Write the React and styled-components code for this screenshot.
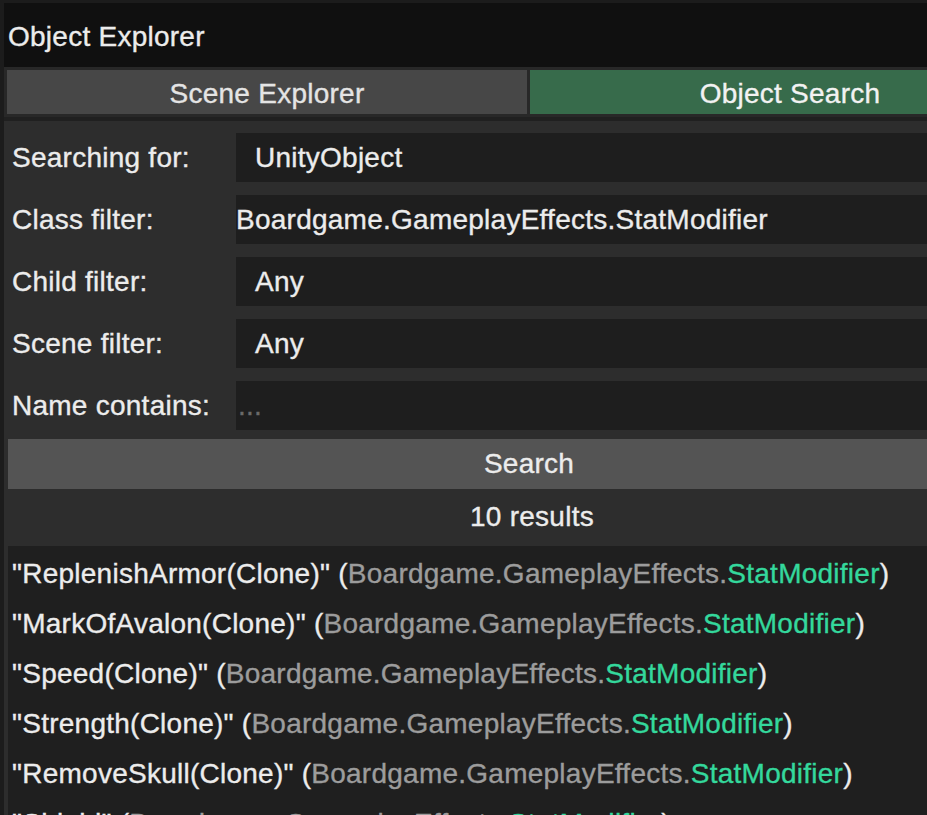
import React from "react";
import styled, { createGlobalStyle } from "styled-components";

const GlobalStyle = createGlobalStyle`
  html, body {
    margin: 0;
    padding: 0;
    background: #1c1c1c;
    overflow: hidden;
  }
  * {
    box-sizing: border-box;
  }
`;

const filters = [
  { label: "Searching for:", value: "UnityObject", padded: true },
  { label: "Class filter:", value: "Boardgame.GameplayEffects.StatModifier" },
  { label: "Child filter:", value: "Any", padded: true },
  { label: "Scene filter:", value: "Any", padded: true },
  { label: "Name contains:", value: "...", placeholder: true },
];

const results = [
  "ReplenishArmor(Clone)",
  "MarkOfAvalon(Clone)",
  "Speed(Clone)",
  "Strength(Clone)",
  "RemoveSkull(Clone)",
  "Shield",
  "Haste(Clone)",
  "Poison(Clone)",
  "Regen(Clone)",
  "Weakness(Clone)",
];

function App() {
  return (
    <>
      <GlobalStyle />
      <Window>
        <TitleBar>Object Explorer</TitleBar>
        <TabBar>
          <Tab>Scene Explorer</Tab>
          <Tab active>Object Search</Tab>
        </TabBar>
        <Content>
          <FilterList>
            {filters.map((f) => (
              <FilterRow key={f.label}>
                <Label>{f.label}</Label>
                <Field padded={f.padded} placeholder={f.placeholder}>
                  {f.value}
                </Field>
              </FilterRow>
            ))}
          </FilterList>
          <SearchButton>Search</SearchButton>
          <ResultCount>10 results</ResultCount>
          <ResultList>
            {results.map((name, i) => (
              <ResultRow key={i}>
                "{name}" (<Namespace>Boardgame.GameplayEffects.</Namespace>
                <TypeName>StatModifier</TypeName>)
              </ResultRow>
            ))}
          </ResultList>
        </Content>
      </Window>
    </>
  );
}

export default App;

const Window = styled.div`
  width: 1060px;
  padding: 3px 0 0 4px;
  background: #1c1c1c;
  display: flex;
  flex-direction: column;
  font-family: "Liberation Sans", Arial, sans-serif;
  font-size: 28px;
  letter-spacing: 0.25px;
  -webkit-text-stroke: 0.35px currentColor;
  color: #ececec;
`;

const TitleBar = styled.div`
  height: 64px;
  flex-shrink: 0;
  background: #101010;
  padding: 3px 0 0 4px;
  display: flex;
  align-items: center;
`;

const TabBar = styled.div`
  display: flex;
  flex-shrink: 0;
  gap: 3px;
  padding: 3px 10px 3px 3px;
  background: #282828;
  border-bottom: 4px solid #202020;
`;

const Tab = styled.div`
  flex: 1;
  height: 44px;
  padding-top: 3px;
  display: flex;
  align-items: center;
  justify-content: center;
  background: ${(p) => (p.active ? "#376b4b" : "#474747")};
  color: ${(p) => (p.active ? "#f2f2f2" : "#e4e4e4")};
`;

const Content = styled.div`
  background: #2d2d2d;
  padding-top: 12px;
  display: flex;
  flex-direction: column;
`;

const FilterList = styled.div`
  display: flex;
  flex-direction: column;
  gap: 13px;
`;

const FilterRow = styled.div`
  display: flex;
  height: 49px;
`;

const Label = styled.div`
  width: 232px;
  padding-left: 8px;
  display: flex;
  align-items: center;
`;

const Field = styled.div`
  flex: 1;
  background: #1e1e1e;
  display: flex;
  align-items: center;
  padding-left: ${(p) => (p.padded ? "19px" : p.placeholder ? "2px" : "0")};
  color: ${(p) => (p.placeholder ? "#6a6a6a" : "#ececec")};
`;

const SearchButton = styled.div`
  margin: 9px 10px 0 4px;
  height: 50px;
  background: #545454;
  display: flex;
  align-items: center;
  justify-content: center;
`;

const ResultCount = styled.div`
  height: 57px;
  display: flex;
  align-items: center;
  justify-content: center;
  padding-bottom: 2px;
`;

const ResultList = styled.div`
  margin: 0 10px 0 4px;
  background: #1f1f1f;
  padding: 3px 0 0 4px;
  display: flex;
  flex-direction: column;
`;

const ResultRow = styled.div`
  height: 50px;
  display: flex;
  align-items: center;
  white-space: pre;
`;

const Namespace = styled.span`
  color: #9c9c9c;
`;

const TypeName = styled.span`
  color: #34d89c;
`;
